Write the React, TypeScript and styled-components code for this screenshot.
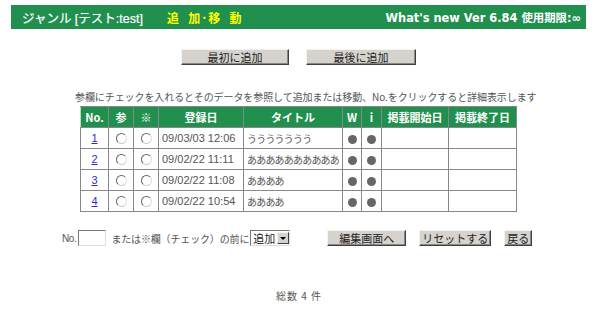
import React from "react";
import styled, { createGlobalStyle } from "styled-components";

const Global = createGlobalStyle`
  html, body { margin: 0; padding: 0; background: #fff; }
  body { font-family: "Liberation Sans", "Noto Sans CJK JP", sans-serif; color: #444; }
`;

const Page = styled.div`
  width: 600px;
  height: 310px;
  padding: 5px 14px 0 11px;
  box-sizing: border-box;
  display: flex;
  flex-direction: column;
`;

const TopBar = styled.div`
  height: 24px;
  background: #21904f;
  display: flex;
  align-items: center;
  padding: 0 5px 0 11px;
  font-family: "Liberation Sans", "Noto Sans CJK JP", sans-serif;
  font-weight: bold;
  font-size: 12px;
`;

const Genre = styled.span`
  color: #fff;
  font-weight: normal;
  font-size: 12.5px;
  -webkit-text-stroke: 0.2px #fff;
`;

const Mode = styled.span`
  color: #ffff00;
  margin-left: 24px;
  letter-spacing: 1px;
  word-spacing: 4px;
  font-size: 12px;
`;

const Version = styled.span`
  color: #fff;
  margin-left: auto;
  font-size: 11.4px;
  font-family: "DejaVu Sans", "Noto Sans CJK JP", sans-serif;
`;

const ButtonRow = styled.div`
  display: flex;
  gap: 17px;
  margin: 20px 0 0 170px;
`;

const Btn = styled.button<{ $w: number }>`
  width: ${(p) => p.$w}px;
  height: 16px;
  padding: 0;
  background: #d6d3ce;
  border: 1px solid;
  border-color: #f4f3f1 #404040 #404040 #f4f3f1;
  box-shadow: inset -1px -1px 0 #8a8780;
  font-family: "Noto Sans CJK JP", sans-serif;
  font-size: 11px;
  line-height: 14px;
  color: #222;
  box-sizing: border-box;
`;

const Notice = styled.div`
  margin: 25px 0 0 64px;
  font-family: "Noto Sans CJK JP", sans-serif;
  font-size: 10px;
  line-height: 14px;
  color: #555;
  letter-spacing: -0.08px;
  white-space: nowrap;
`;

const Table = styled.table`
  margin: 2px 0 0 69px;
  border-collapse: collapse;
  border: 1px solid #888;
  font-family: "Noto Sans CJK JP", sans-serif;
  font-size: 11px;
  width: 436px;
  table-layout: fixed;
`;

const Col = styled.col<{ $w: number }>`
  width: ${(p) => p.$w}px;
`;

const Th = styled.th`
  height: 20px;
  padding: 0;
  background: #21904f;
  color: #fff;
  font-weight: bold;
  font-size: 11px;
  border: 1px solid #888;
  border-left-color: #bcd9c7;
  text-align: center;
  white-space: nowrap;
  overflow: hidden;
`;

const Td = styled.td<{ $align?: string }>`
  height: 20px;
  padding: 0 0 0 ${(p) => (p.$align === "left" ? "3px" : "0")};
  border: 1px solid #888;
  text-align: ${(p) => p.$align || "center"};
  color: #555;
  font-family: "Liberation Sans", "Noto Sans CJK JP", sans-serif;
  font-size: 11px;
  white-space: nowrap;
  overflow: hidden;
`;

const Kana = styled.span`
  font-family: "Noto Sans CJK JP", sans-serif;
  font-size: 10px;
  letter-spacing: -0.8px;
`;

const NumLink = styled.a`
  color: #2b2bd6;
  text-decoration: underline;
  font-family: "Liberation Sans", sans-serif;
  font-size: 11px;
`;

const Radio = styled.span`
  display: inline-block;
  width: 9px;
  height: 9px;
  border-radius: 50%;
  border: 1px solid #666;
  border-right-color: #ddd;
  border-bottom-color: #ccc;
  vertical-align: middle;
  background: #fff;
`;

const Dot = styled.span`
  display: inline-block;
  width: 9px;
  height: 9px;
  border-radius: 50%;
  background: #666;
  vertical-align: middle;
`;

const BottomRow = styled.div`
  display: flex;
  align-items: center;
  margin: 18px 0 0 51px;
  font-family: "Noto Sans CJK JP", sans-serif;
  font-size: 10px;
  color: #555;
`;

const NoLabel = styled.span`
  font-family: "Liberation Sans", sans-serif;
  font-size: 10px;
  letter-spacing: -0.4px;
`;

const NoInput = styled.span`
  width: 28px;
  height: 16px;
  margin: 0 2px 0 2px;
  box-sizing: border-box;
  border: 1px solid;
  border-color: #777 #ddd #ddd #777;
  background: #fff;
`;

const Phrase = styled.span`
  margin-left: 3px;
  letter-spacing: -0.15px;
`;

const Select = styled.span`
  display: flex;
  align-items: center;
  height: 16px;
  box-sizing: border-box;
  border: 1px solid;
  border-color: #777 #ddd #ddd #777;
  background: #fff;
  margin-left: 1px;
  padding-left: 2px;
  font-size: 11px;
  color: #222;
`;

const Arrow = styled.span`
  width: 12px;
  height: 12px;
  margin-left: 2px;
  background: #d6d3ce;
  border: 1px solid;
  border-color: #f4f3f1 #404040 #404040 #f4f3f1;
  box-sizing: border-box;
  display: flex;
  align-items: center;
  justify-content: center;
  &::after {
    content: "";
    border-left: 3px solid transparent;
    border-right: 3px solid transparent;
    border-top: 3px solid #000;
  }
`;

const BottomBtns = styled.div`
  display: flex;
  gap: 13px;
  margin-left: 37px;
`;

const Total = styled.div`
  margin: 42px 0 0 265px;
  font-family: "Noto Sans CJK JP", sans-serif;
  font-size: 10px;
  color: #555;
  letter-spacing: 1px;
`;

const rows = [
  { no: 1, date: "09/03/03 12:06", title: "ううううううう" },
  { no: 2, date: "09/02/22 11:11", title: "ああああああああああ" },
  { no: 3, date: "09/02/22 11:08", title: "ああああ" },
  { no: 4, date: "09/02/22 10:54", title: "ああああ" },
];

const widths = [28, 25, 25, 85, 99, 19, 20, 67, 68];
const heads = ["No.", "参", "※", "登録日", "タイトル", "W", "i", "掲載開始日", "掲載終了日"];

export default function App() {
  return (
    <>
      <Global />
      <Page>
        <TopBar>
          <Genre>ジャンル [テスト:test]</Genre>
          <Mode>追 加･移 動</Mode>
          <Version>What's new Ver 6.84 使用期限:∞</Version>
        </TopBar>
        <ButtonRow>
          <Btn $w={108}>最初に追加</Btn>
          <Btn $w={110}>最後に追加</Btn>
        </ButtonRow>
        <Notice>参欄にチェックを入れるとそのデータを参照して追加または移動、No.をクリックすると詳細表示します</Notice>
        <Table>
          <colgroup>
            {widths.map((w, i) => (
              <Col key={i} $w={w} />
            ))}
          </colgroup>
          <thead>
            <tr>
              {heads.map((h) => (
                <Th key={h}>{h}</Th>
              ))}
            </tr>
          </thead>
          <tbody>
            {rows.map((r) => (
              <tr key={r.no}>
                <Td>
                  <NumLink href="#">{r.no}</NumLink>
                </Td>
                <Td>
                  <Radio />
                </Td>
                <Td>
                  <Radio />
                </Td>
                <Td $align="left">{r.date}</Td>
                <Td $align="left">
                  <Kana>{r.title}</Kana>
                </Td>
                <Td>
                  <Dot />
                </Td>
                <Td>
                  <Dot />
                </Td>
                <Td />
                <Td />
              </tr>
            ))}
          </tbody>
        </Table>
        <BottomRow>
          <NoLabel>No.</NoLabel>
          <NoInput />
          <Phrase>または※欄（チェック）の前に</Phrase>
          <Select>
            追加
            <Arrow />
          </Select>
          <BottomBtns>
            <Btn $w={79}>編集画面へ</Btn>
            <Btn $w={72}>リセットする</Btn>
            <Btn $w={28}>戻る</Btn>
          </BottomBtns>
        </BottomRow>
        <Total>総数 4 件</Total>
      </Page>
    </>
  );
}
